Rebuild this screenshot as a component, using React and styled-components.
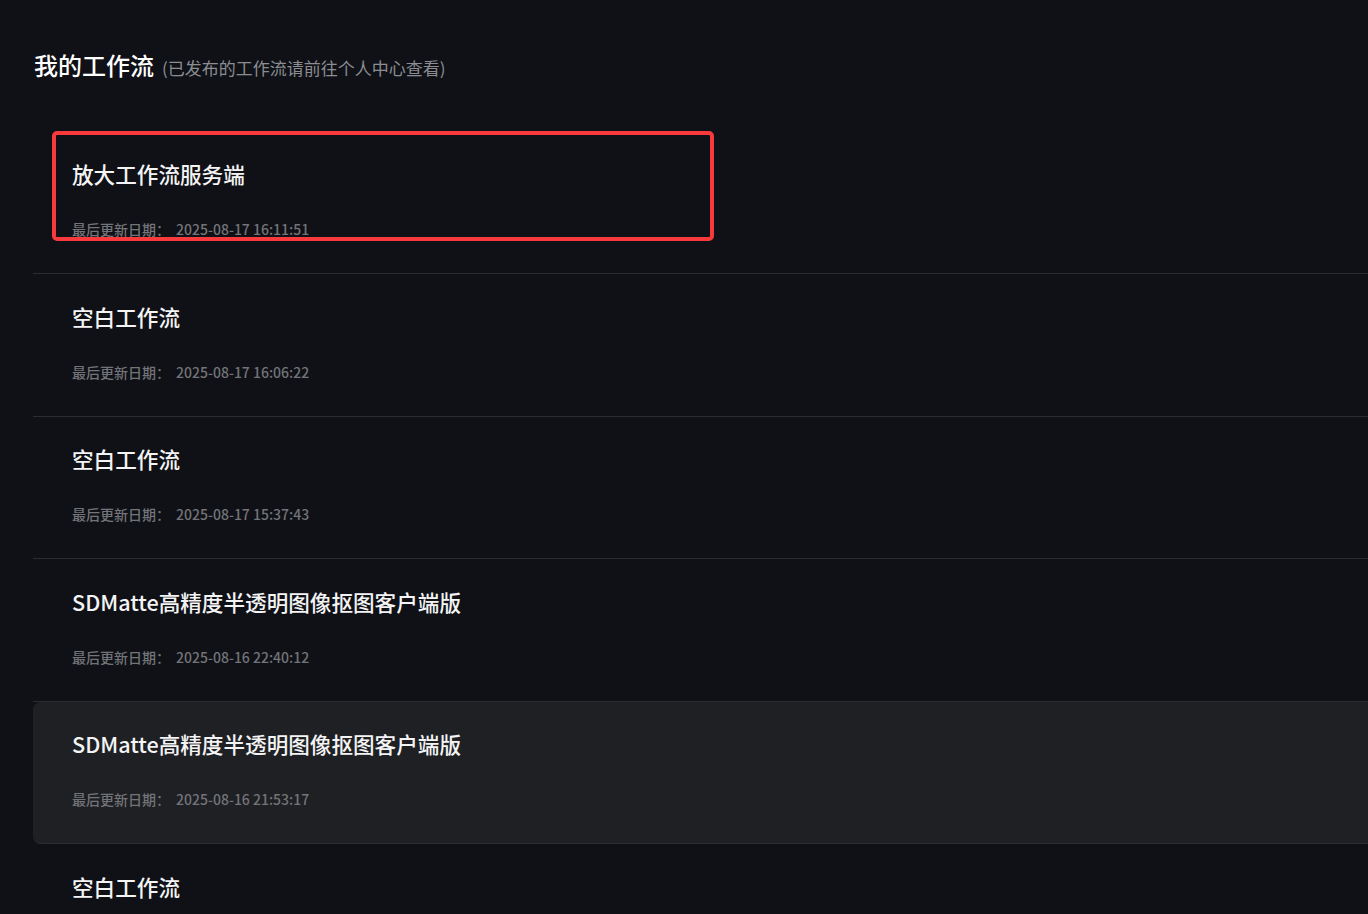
import React from "react";
import styled, { createGlobalStyle } from "styled-components";

const GlobalStyle = createGlobalStyle`
  html, body {
    margin: 0;
    padding: 0;
    background: #0f1116;
    overflow: hidden;
  }
  body {
    font-family: "Noto Sans CJK SC", "Noto Sans", sans-serif;
  }
`;

const Page = styled.div`
  height: 914px;
  overflow: hidden;
  background: #0f1116;
  padding: 48px 0 0 33px;
  box-sizing: border-box;
`;

const Header = styled.div`
  display: flex;
  align-items: baseline;
  padding-left: 1px;
  margin-bottom: 49.5px;
`;

const Heading = styled.h2`
  margin: 0;
  font-size: 24px;
  line-height: 34px;
  font-weight: 500;
  color: #ffffff;
`;

const Hint = styled.span`
  margin-left: 8px;
  font-size: 17px;
  color: #8b8d92;
`;

const List = styled.div`
  width: 1400px;
  display: flex;
  flex-direction: column;
`;

const Row = styled.div`
  position: relative;
  padding: 27.5px 39px 34px;
  border-bottom: 1px solid #2a2c31;
  border-radius: ${(p) => (p.$active ? "8px" : "0")};
  background: ${(p) => (p.$active ? "#1e2024" : "transparent")};
`;

const Name = styled.div`
  font-size: 21.6px;
  line-height: 30px;
  font-weight: 500;
  color: #f4f4f5;
`;

const Meta = styled.div`
  margin-top: 30px;
  font-size: 14px;
  line-height: 20px;
  font-weight: 500;
  color: #737479;
`;

const Stamp = styled.span`
  margin-left: 6px;
`;

const Highlight = styled.div`
  position: absolute;
  top: -1px;
  left: 19px;
  width: 662px;
  height: 110px;
  box-sizing: border-box;
  border: 4px solid #f83a3c;
  border-radius: 5px;
  pointer-events: none;
`;

const flows = [
  { name: "放大工作流服务端", date: "2025-08-17 16:11:51", marked: true },
  { name: "空白工作流", date: "2025-08-17 16:06:22" },
  { name: "空白工作流", date: "2025-08-17 15:37:43" },
  { name: "SDMatte高精度半透明图像抠图客户端版", date: "2025-08-16 22:40:12" },
  { name: "SDMatte高精度半透明图像抠图客户端版", date: "2025-08-16 21:53:17", active: true },
  { name: "空白工作流", date: "2025-08-16 20:12:05" },
];

const App = () => (
  <>
    <GlobalStyle />
    <Page>
      <Header>
        <Heading>我的工作流</Heading>
        <Hint>(已发布的工作流请前往个人中心查看)</Hint>
      </Header>
      <List>
        {flows.map((f, i) => (
          <Row key={i} $active={f.active}>
            <Name>{f.name}</Name>
            <Meta>
              最后更新日期：<Stamp>{f.date}</Stamp>
            </Meta>
            {f.marked && <Highlight />}
          </Row>
        ))}
      </List>
    </Page>
  </>
);

export default App;
